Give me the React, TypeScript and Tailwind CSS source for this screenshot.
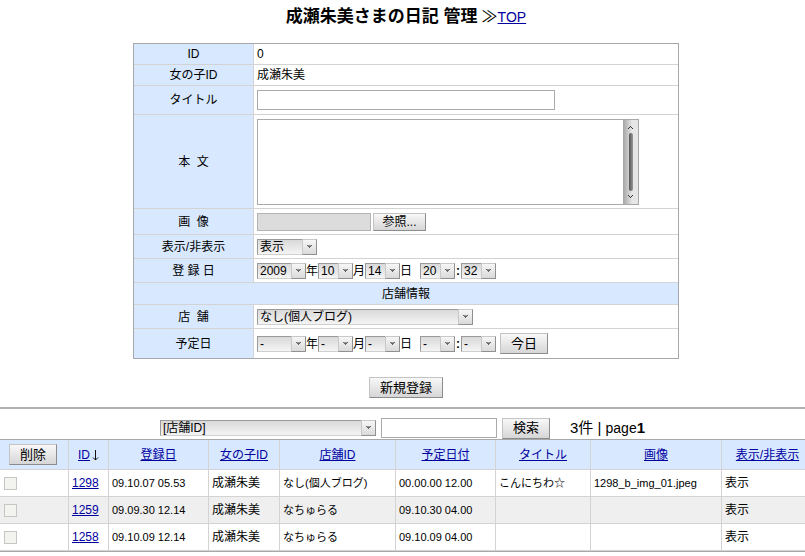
import type { ButtonHTMLAttributes, ReactNode } from "react";

type Entry = {
  id: string;
  registered: string;
  girl: string;
  shop: string;
  planned: string;
  title: string;
  image: string;
  visible: string;
};

const entries: Entry[] = [
  {
    id: "1298",
    registered: "09.10.07 05.53",
    girl: "成瀬朱美",
    shop: "なし(個人ブログ)",
    planned: "00.00.00 12.00",
    title: "こんにちわ☆",
    image: "1298_b_img_01.jpeg",
    visible: "表示",
  },
  {
    id: "1259",
    registered: "09.09.30 12.14",
    girl: "成瀬朱美",
    shop: "なちゅらる",
    planned: "09.10.30 04.00",
    title: "",
    image: "",
    visible: "表示",
  },
  {
    id: "1258",
    registered: "09.10.09 12.14",
    girl: "成瀬朱美",
    shop: "なちゅらる",
    planned: "09.10.09 04.00",
    title: "",
    image: "",
    visible: "表示",
  },
];

function Button({
  className = "h-[21px] px-[10px] text-[13px]",
  ...props
}: ButtonHTMLAttributes<HTMLButtonElement>) {
  return (
    <button
      type="button"
      className={`${className} flex shrink-0 items-center justify-center whitespace-nowrap border border-[#c4c4c4] border-r-[#8c8c8c] border-b-[#8c8c8c] bg-linear-to-b from-[#f8f8f8] to-[#d6d6d6] leading-4`}
      {...props}
    />
  );
}

function Select({
  label,
  id,
  options,
  className,
}: {
  label: string;
  id?: string;
  options: string[];
  className: string;
}) {
  return (
    <span className={`relative block h-4 shrink-0 ${className}`}>
      <select
        id={id}
        aria-label={label}
        className="block h-4 w-full appearance-none border border-[#d0d0d0] border-t-[#9a9a9a] border-l-[#9a9a9a] bg-linear-to-b from-[#d9d9d9] to-[#f4f4f4] pl-[2px] text-[12px] leading-[14px]"
      >
        {options.map((o) => (
          <option key={o}>{o}</option>
        ))}
      </select>
      <svg
        className="pointer-events-none absolute top-0 right-0 h-4 w-[15px] border border-[#c8c8c8] border-r-[#909090] border-b-[#909090] bg-linear-to-b from-[#f6f6f6] to-[#dadada]"
        viewBox="0 0 13 14"
        shapeRendering="crispEdges"
        aria-hidden="true"
      >
        <path d="M4 5h5v1H8v1H7v1H6V7H5V6H4z" fill="#666" />
        <path d="M5 5h3v1H5z" fill="#999" />
      </svg>
    </span>
  );
}

function Row({
  label,
  htmlFor,
  height,
  last,
  children,
}: {
  label: string;
  htmlFor?: string;
  height: string;
  last?: boolean;
  children: ReactNode;
}) {
  const Label = htmlFor ? "label" : "div";
  return (
    <div className={`flex ${height} ${last ? "" : "border-b border-[#d3d3d3]"}`}>
      <Label
        htmlFor={htmlFor}
        className="flex w-[120px] shrink-0 items-center justify-center whitespace-pre border-r border-[#d3d3d3] bg-[#d7e8ff]"
      >
        {label}
      </Label>
      <div className="flex min-w-0 flex-1 items-center pl-[3px]">{children}</div>
    </div>
  );
}

function DateSelects({
  name,
  values,
}: {
  name: string;
  values: [string, string, string, string, string];
}) {
  const [y, m, d, h, min] = values;
  return (
    <>
      <Select label={`${name} 年`} options={[y]} className="w-[49px]" />
      年
      <Select label={`${name} 月`} options={[m]} className="w-[35px]" />
      月
      <Select label={`${name} 日`} options={[d]} className="w-[35px]" />
      <span className="mr-2">日</span>
      <Select label={`${name} 時`} options={[h]} className="w-[35px]" />
      <span className="w-[6px] text-center font-bold">:</span>
      <Select label={`${name} 分`} options={[min]} className="w-[35px]" />
    </>
  );
}

function ScrollTrack() {
  return (
    <div className="flex w-4 flex-col items-center justify-between border-y border-r border-[#a8a8a8] bg-linear-to-r from-[#a4a4a4] to-[#e6e6e6] to-60% py-[5px]">
      <svg width="5" height="5" viewBox="0 0 5 5" shapeRendering="crispEdges" aria-hidden="true">
        <path d="M2 1h1v1h1v1h1v1H4V3H3V2H2v1H1v1H0V3h1V2h1z" fill="#333" />
      </svg>
      <div className="my-[3px] w-1 flex-1 rounded-sm bg-linear-to-r from-[#555] to-[#999]" />
      <svg width="5" height="5" viewBox="0 0 5 5" shapeRendering="crispEdges" aria-hidden="true">
        <path d="M0 1h1v1h1v1h1V2h1V1h1v1H4v1H3v1H2V3H1V2H0z" fill="#333" />
      </svg>
    </div>
  );
}

function DiaryForm() {
  return (
    <form>
      <div className="mx-auto w-full max-w-[546px] border border-[#a6a8aa]">
        <Row label="ID" height="min-h-[21px]">
          0
        </Row>
        <Row label="女の子ID" height="min-h-[21px]">
          成瀬朱美
        </Row>
        <Row label="タイトル" htmlFor="title" height="min-h-[29px]">
          <input id="title" type="text" className="h-5 w-[298px] border border-[#aaa] px-1" />
        </Row>
        <Row label={"本  文"} htmlFor="body" height="min-h-[94px]">
          <div className="flex h-[86px]">
            <textarea
              id="body"
              className="block w-[366px] resize-none overflow-hidden border border-r-0 border-[#aaa] p-1"
            />
            <ScrollTrack />
          </div>
        </Row>
        <Row label={"画  像"} htmlFor="image" height="min-h-[26px]">
          <input
            id="image"
            type="text"
            readOnly
            className="mr-[2px] h-[18px] w-[114px] border border-[#b4b4b4] bg-[#dcdcdc]"
          />
          <Button className="h-[18px] w-[53px] text-[12px]">参照...</Button>
        </Row>
        <Row label="表示/非表示" htmlFor="visible" height="min-h-6">
          <Select
            id="visible"
            label="表示/非表示"
            options={["表示", "非表示"]}
            className="w-[60px]"
          />
        </Row>
        <Row label="登 録 日" height="min-h-6">
          <DateSelects name="登録日" values={["2009", "10", "14", "20", "32"]} />
        </Row>
        <h2 className="flex min-h-[22px] items-center justify-center border-b border-[#d3d3d3] bg-[#d7e8ff]">
          店舗情報
        </h2>
        <Row label={"店  舗"} htmlFor="shop" height="min-h-6">
          <Select
            id="shop"
            label="店舗"
            options={["なし(個人ブログ)", "なちゅらる"]}
            className="w-[216px]"
          />
        </Row>
        <Row label="予定日" height="min-h-[29px]" last>
          <DateSelects name="予定日" values={["-", "-", "-", "-", "-"]} />
          <span className="ml-1">
            <Button>今日</Button>
          </span>
        </Row>
      </div>
      <div className="mt-[18px] flex justify-center">
        <Button>新規登録</Button>
      </div>
    </form>
  );
}

function HeadLink({ children }: { children: ReactNode }) {
  return (
    <a href="#" className="text-[#0000a0] underline">
      {children}
    </a>
  );
}

function EntryTable() {
  const head = "border-r border-b border-[#d3d3d3] font-normal";
  const cell = "border-r border-b border-[#d3d3d3] pl-[3px]";
  return (
    <table className="w-full table-fixed border-separate border-spacing-0 whitespace-nowrap border-y border-[#a6a8aa]">
      <colgroup>
        <col className="w-[69px]" />
        <col className="w-[40px]" />
        <col className="w-[100px]" />
        <col className="w-[71px]" />
        <col className="w-[116px]" />
        <col className="w-[100px]" />
        <col className="w-[95px]" />
        <col className="w-[131px]" />
        <col />
      </colgroup>
      <thead>
        <tr className="h-[30px] bg-[#d7e8ff]">
          <th className={`${head} pl-[9px]`}>
            <Button>削除</Button>
          </th>
          <th className={head}>
            <span className="flex items-center justify-center">
              <HeadLink>ID</HeadLink>
              <svg
                className="ml-[2px]"
                width="7"
                height="12"
                viewBox="0 0 7 12"
                fill="none"
                stroke="#111"
                aria-label="降順"
              >
                <path d="M3.5 1v10M1 8.5 3.5 11 6 8.5" />
              </svg>
            </span>
          </th>
          <th className={head}>
            <HeadLink>登録日</HeadLink>
          </th>
          <th className={head}>
            <HeadLink>女の子ID</HeadLink>
          </th>
          <th className={head}>
            <HeadLink>店舗ID</HeadLink>
          </th>
          <th className={head}>
            <HeadLink>予定日付</HeadLink>
          </th>
          <th className={head}>
            <HeadLink>タイトル</HeadLink>
          </th>
          <th className={head}>
            <HeadLink>画像</HeadLink>
          </th>
          <th className="border-b border-[#d3d3d3] pl-2 font-normal">
            <HeadLink>表示/非表示</HeadLink>
          </th>
        </tr>
      </thead>
      <tbody>
        {entries.map((e) => (
          <tr key={e.id} className="h-[27px] even:bg-[#efefef]">
            <td className={cell}>
              <input
                type="checkbox"
                aria-label={`${e.id} を削除`}
                className="ml-px block size-[13px] appearance-none border border-[#c6c6c2] bg-[#f3f3ef] checked:bg-[#777]"
              />
            </td>
            <td className={cell}>
              <HeadLink>{e.id}</HeadLink>
            </td>
            <td className={`${cell} text-[11px]`}>{e.registered}</td>
            <td className={cell}>{e.girl}</td>
            <td className={`${cell} text-[11px]`}>{e.shop}</td>
            <td className={`${cell} text-[11px]`}>{e.planned}</td>
            <td className={`${cell} text-[11px]`}>{e.title}</td>
            <td className={`${cell} text-[11px]`}>{e.image}</td>
            <td className="border-b border-[#d3d3d3] pl-[3px]">{e.visible}</td>
          </tr>
        ))}
      </tbody>
    </table>
  );
}

export default function App() {
  return (
    <div className="min-h-screen overflow-x-hidden bg-white font-['Liberation_Sans','Noto_Sans_CJK_JP',sans-serif] text-[12px] leading-4 text-black">
      <div className="pl-[7px]">
        <header className="flex items-center justify-center pt-1 pb-[13px] leading-[26px]">
          <h1 className="text-[17px] font-bold">成瀬朱美さまの日記 管理</h1>
          <span className="ml-1 text-[16px]">≫</span>
          <a href="#" className="text-[14px] text-[#0000a0] underline">
            TOP
          </a>
        </header>
        <DiaryForm />
      </div>
      <div className="mt-[9px] border-t-2 border-[#b0b0b0] pt-2">
        <div className="flex h-[22px] items-center justify-center">
          <Select label="検索項目" options={["[店舗ID]", "[女の子ID]"]} className="w-[216px]" />
          <input
            type="text"
            aria-label="検索キーワード"
            className="mr-[5px] ml-[5px] h-5 w-[116px] border border-[#aaa] px-1"
          />
          <Button>検索</Button>
          <p className="ml-5 text-[15px]">
            3件 | <span className="text-[14px]">page</span>
            <b>1</b>
          </p>
        </div>
        <EntryTable />
      </div>
    </div>
  );
}
